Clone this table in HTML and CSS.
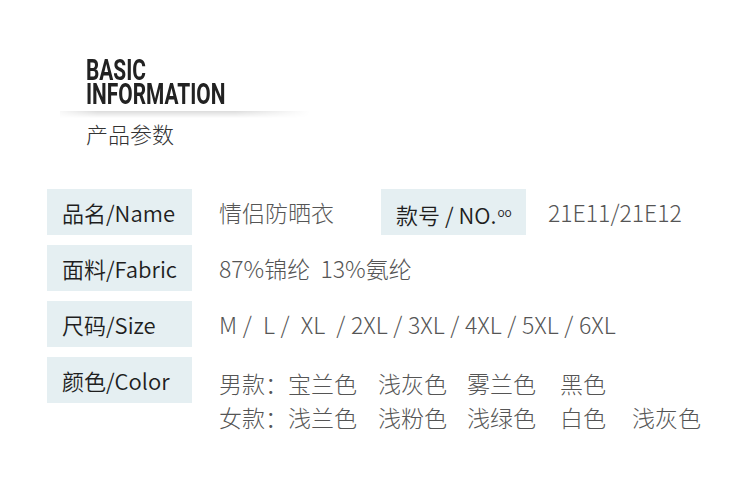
FILE: index.html
```html
<!DOCTYPE html>
<html lang="zh">
<head>
<meta charset="utf-8">
<link rel="stylesheet" href="styles.css">
</head>
<body>
<div class="page">
  <header class="head">
    <div class="title"><span class="t">BASIC</span><span class="t">INFORMATION</span></div>
    <div class="rule"></div>
    <div class="sub">产品参数</div>
  </header>
  <section class="table">
    <div class="row">
      <div class="label">品名/Name</div>
      <div class="value v-name">情侣防晒衣</div>
      <div class="label">款号 / NO.<span class="oo">oo</span></div>
      <div class="value v-no">21E11/21E12</div>
    </div>
    <div class="row">
      <div class="label">面料/Fabric</div>
      <div class="value">87%锦纶&nbsp;&nbsp;13%氨纶</div>
    </div>
    <div class="row">
      <div class="label">尺码/Size</div>
      <div class="value size">M /&nbsp;&nbsp;L /&nbsp;&nbsp;XL&nbsp;&nbsp;/ 2XL / 3XL / 4XL / 5XL / 6XL</div>
    </div>
    <div class="row">
      <div class="label">颜色/Color</div>
      <div class="colors">
        <span>男款：</span><span>宝兰色</span><span>浅灰色</span><span>雾兰色</span><span>黑色</span><span></span>
        <span>女款：</span><span>浅兰色</span><span>浅粉色</span><span>浅绿色</span><span>白色</span><span>浅灰色</span>
      </div>
    </div>
  </section>
</div>
</body>
</html>
```
FILE: styles.css
```css
html, body {
  margin: 0;
  padding: 0;
  background: #ffffff;
}
.page {
  width: 750px;
  height: 479px;
  overflow: hidden;
  font-family: "Noto Sans CJK SC", "Noto Sans", sans-serif;
}
.head {
  padding-top: 58px;
  padding-left: 60px;
}
.title {
  padding-left: 26px;
  display: flex;
  flex-direction: column;
  align-items: flex-start;
}
.t {
  display: block;
  font-family: Roboto, "Liberation Sans", sans-serif;
  font-weight: 700;
  font-size: 29px;
  line-height: 24px;
  height: 24px;
  color: #222;
  transform: scaleX(0.72);
  transform-origin: left center;
}
.rule {
  margin-top: 5px;
  width: 250px;
  height: 7px;
  background: linear-gradient(to bottom, rgba(0,0,0,0.14), rgba(0,0,0,0) 100%);
  -webkit-mask-image: linear-gradient(to right, rgba(0,0,0,0.2), #000 15%, #000 70%, rgba(0,0,0,0));
  mask-image: linear-gradient(to right, rgba(0,0,0,0.2), #000 15%, #000 70%, rgba(0,0,0,0));
}
.sub {
  padding-left: 26px;
  font-size: 22px;
  line-height: 30px;
  color: #333;
  font-weight: 300;
}
.table {
  margin-top: 41px;
  padding-left: 47px;
  display: flex;
  flex-direction: column;
  gap: 10px;
}
.row {
  display: flex;
  align-items: flex-start;
}
.label {
  width: 145px;
  height: 46px;
  box-sizing: border-box;
  padding-left: 15px;
  background: #e5eff2;
  color: #1e1e1e;
  font-size: 22px;
  font-weight: 350;
  line-height: 46px;
  white-space: nowrap;
  flex: none;
}
.oo {
  font-size: 12px;
  vertical-align: 7px;
  margin-left: 1px;
}
.value {
  margin-left: 27px;
  font-size: 23px;
  line-height: 46px;
  color: #555;
  font-weight: 300;
  white-space: nowrap;
}
.v-name {
  width: 162px;
  flex: none;
}
.row .v-no {
  margin-left: 22px;
}
.size {
  word-spacing: 0.5px;
}
.colors {
  margin-left: 27px;
  margin-top: 9px;
  display: grid;
  grid-template-columns: 69px 90px 89px 93px 72px auto;
  font-size: 23px;
  line-height: 34px;
  color: #555;
  font-weight: 300;
  white-space: nowrap;
}
```
